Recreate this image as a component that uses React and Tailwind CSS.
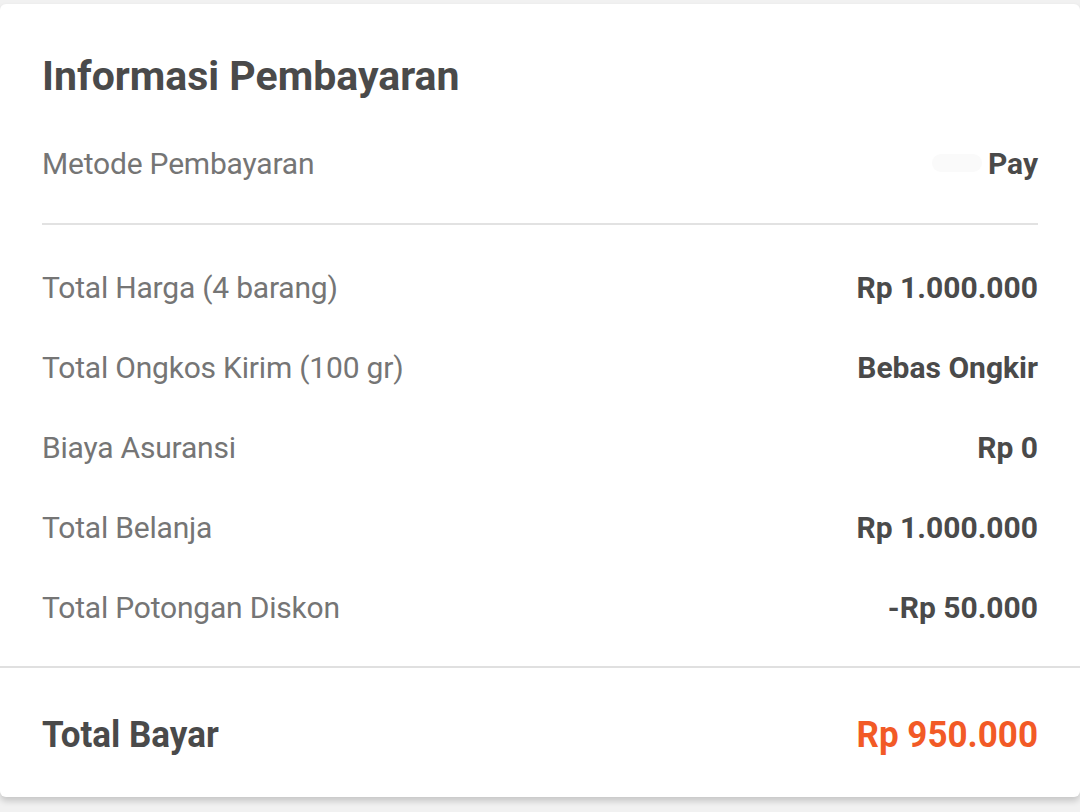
import React from 'react';

const rows = [
    { label: 'Total Harga (4 barang)', value: 'Rp 1.000.000' },
    { label: 'Total Ongkos Kirim (100 gr)', value: 'Bebas Ongkir' },
    { label: 'Biaya Asuransi', value: 'Rp 0' },
    { label: 'Total Belanja', value: 'Rp 1.000.000' },
    { label: 'Total Potongan Diskon', value: '-Rp 50.000' },
];

export default function App() {
    return (
        <div className="min-h-[812px] bg-[#f1f1f1] pt-[4px]" style={{ fontFamily: 'Roboto, "Noto Sans", sans-serif' }}>
            <div className="bg-white rounded-[6px] shadow-[0_4px_6px_rgba(0,0,0,0.18)]">
                <div className="px-[42px] pt-[48px]">
                    <h2 className="text-[41px] leading-[48px] font-bold text-[#4a4a4a]">Informasi Pembayaran</h2>

                    <div className="mt-[23px] h-[80px] flex items-center justify-between">
                        <span className="text-[30px] text-[#757575] tracking-[-0.2px]">Metode Pembayaran</span>
                        <span className="flex items-center gap-[6px]">
                            <span className="w-[50px] h-[18px] rounded-full bg-[#fafafa]"></span>
                            <span className="text-[30px] font-bold text-[#4a4a4a]">Pay</span>
                        </span>
                    </div>

                    <div className="mt-[20px] h-[2px] bg-[#e2e2e2]"></div>

                    <div className="mt-[22px]">
                        {rows.map((row) => (
                            <div key={row.label} className="h-[80px] flex items-center justify-between">
                                <span className="text-[30px] text-[#757575] tracking-[-0.2px]">{row.label}</span>
                                <span className="text-[30px] font-bold text-[#4a4a4a]">{row.value}</span>
                            </div>
                        ))}
                    </div>
                </div>

                <div className="mt-[19px] h-[2px] bg-[#e0e0e0]"></div>

                <div className="h-[129px] px-[42px] pt-[6px] flex items-center justify-between">
                    <span className="text-[35px] font-bold text-[#4a4a4a] scale-y-[1.08]">Total Bayar</span>
                    <span className="text-[35px] font-bold text-[#f25a26] scale-y-[1.08]">Rp 950.000</span>
                </div>
            </div>
        </div>
    );
}
